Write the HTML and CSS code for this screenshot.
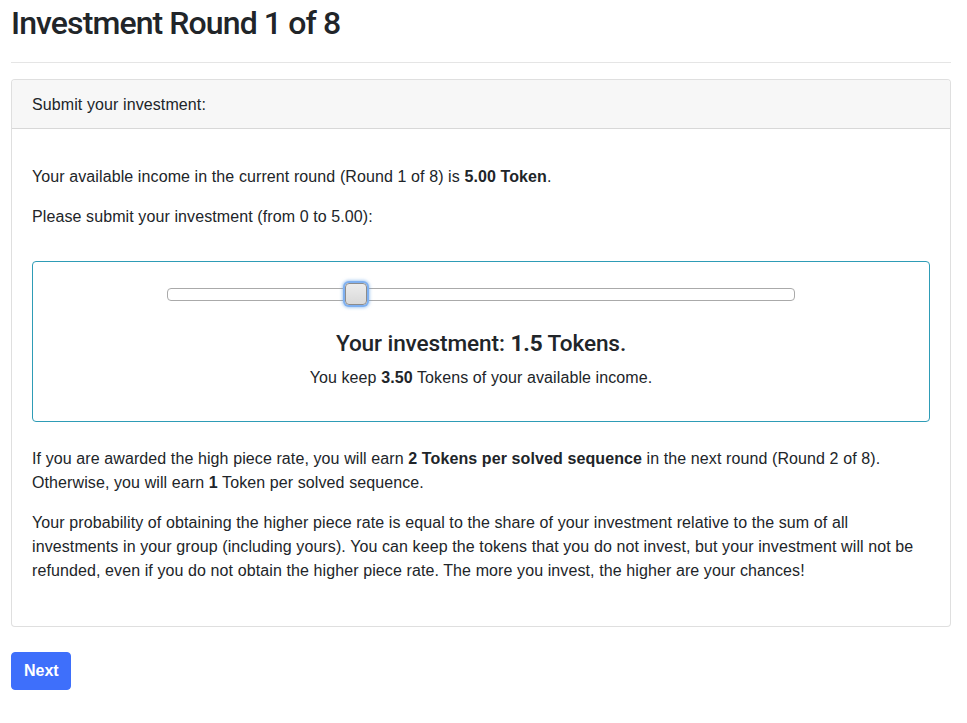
FILE: index.html
```html
<!DOCTYPE html>
<html lang="en">
<head>
<meta charset="utf-8">
<title>Investment Round 1 of 8</title>
<link rel="stylesheet" href="styles.css">
</head>
<body>
<div class="page">
  <h2 class="title">Investment Round 1 of 8</h2>
  <hr class="rule">
  <div class="card">
    <div class="card-header">Submit your investment:</div>
    <div class="card-body">
      <p>Your available income in the current round (Round 1 of 8) is <b>5.00 Token</b>.</p>
      <p>Please submit your investment (from 0 to 5.00):</p>
      <div class="invest-box">
        <div class="slider">
          <span class="handle" style="left: 30%"></span>
        </div>
        <h4 class="invest-title">Your investment: <b>1.5</b> Tokens.</h4>
        <div class="keep">You keep <b>3.50</b> Tokens of your available income.</div>
      </div>
      <p>If you are awarded the high piece rate, you will earn <b>2 Tokens per solved sequence</b> in the next round (Round 2 of 8). Otherwise, you will earn <b>1</b> Token per solved sequence.</p>
      <p>Your probability of obtaining the higher piece rate is equal to the share of your investment relative to the sum of all investments in your group (including yours). You can keep the tokens that you do not invest, but your investment will not be refunded, even if you do not obtain the higher piece rate. The more you invest, the higher are your chances!</p>
    </div>
  </div>
  <button class="btn-next" type="button">Next</button>
</div>
</body>
</html>
```

FILE: styles.css
```css
* { box-sizing: border-box; }

body {
  margin: 0;
  font-family: "Liberation Sans", Arial, sans-serif;
  font-size: 16px;
  line-height: 1.5;
  letter-spacing: 0.1px;
  color: #212529;
  background: #fff;
}

.page {
  padding: 0 16px 0 11px;
}

.title {
  margin: 0;
  padding-top: 4px;
  font-family: Roboto, "Liberation Sans", Arial, sans-serif;
  font-size: 32px;
  font-weight: 500;
  line-height: 1.2;
  letter-spacing: -0.9px;
}

.rule {
  margin: 20px 0 16px;
  border: 0;
  border-top: 1px solid rgba(0, 0, 0, 0.1);
}

.card {
  border: 1px solid rgba(0, 0, 0, 0.125);
  border-radius: 4px;
  background: #fff;
}

.card-header {
  padding: 13px 20px 11px;
  background: #f7f7f7;
  border-bottom: 1px solid rgba(0, 0, 0, 0.125);
  border-radius: 3px 3px 0 0;
}

.card-body {
  padding: 36px 20px 27px;
}

.card-body p {
  margin: 0 0 16px;
}

.invest-box {
  margin: 32px 0 25px;
  border: 1px solid #2e9cb6;
  border-radius: 4px;
  padding: 26px 0 31px;
  text-align: center;
}

.slider {
  position: relative;
  width: 70%;
  height: 13px;
  margin: 0 auto;
  border: 1px solid #aaa;
  border-radius: 4px;
  background: #fff;
}

.handle {
  position: absolute;
  top: -6px;
  width: 22px;
  height: 22px;
  margin-left: -11px;
  border: 1px solid #8c8c8c;
  border-radius: 4px;
  background: linear-gradient(#ececec, #d9d9d9);
  box-shadow: 0 0 0 2px #7fb0f0, 0 0 3px 3px rgba(94, 158, 230, 0.5);
}

.invest-title {
  margin: 29px 0 8px;
  font-family: Roboto, "Liberation Sans", Arial, sans-serif;
  font-size: 22.6px;
  font-weight: 500;
  line-height: 1.2;
  letter-spacing: -0.1px;
}

.invest-title b {
  font-weight: 700;
}

.keep {
  font-size: 16px;
}

.btn-next {
  margin-top: 25px;
  padding: 6px 12px;
  width: 60px;
  height: 38px;
  font-family: "Liberation Sans", Arial, sans-serif;
  font-size: 16px;
  font-weight: 600;
  line-height: 24px;
  color: #fff;
  background: #3e6ffb;
  border: 1px solid #3e6ffb;
  border-radius: 4px;
}
```
